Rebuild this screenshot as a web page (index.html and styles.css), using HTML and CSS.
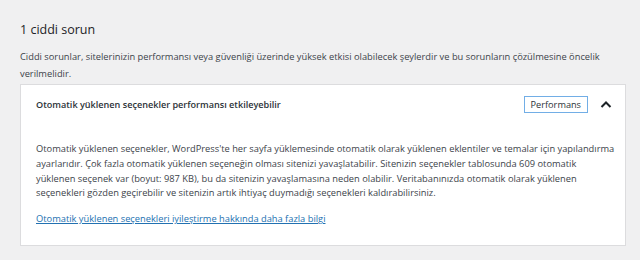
FILE: index.html
```html
<!DOCTYPE html>
<html lang="tr">
<head>
    <meta charset="UTF-8" />
    <title>Site Sağlığı</title>
    <link rel="stylesheet" href="styles.css">
</head>
<body>
    <div class="health-section">
        <h2 class="section-title">1 ciddi sorun</h2>
        <p class="section-desc">Ciddi sorunlar, sitelerinizin performansı veya güvenliği üzerinde yüksek etkisi olabilecek şeylerdir ve bu sorunların çözülmesine öncelik verilmelidir.</p>

        <div class="issue-card">
            <div class="issue-header">
                <span class="issue-title">Otomatik yüklenen seçenekler performansı etkileyebilir</span>
                <span class="badge">Performans</span>
                <svg class="chevron" width="12" height="8" viewBox="0 0 12 8">
                    <path d="M1.5 7 L6 2.5 L10.5 7" fill="none" stroke="#1d2327" stroke-width="2"/>
                </svg>
            </div>
            <div class="issue-body">
                <p>Otomatik yüklenen seçenekler, WordPress'te her sayfa yüklemesinde otomatik olarak yüklenen eklentiler ve temalar için yapılandırma ayarlarıdır. Çok fazla otomatik yüklenen seçeneğin olması sitenizi yavaşlatabilir. Sitenizin seçenekler tablosunda 609 otomatik yüklenen seçenek var (boyut: 987 KB), bu da sitenizin yavaşlamasına neden olabilir. Veritabanınızda otomatik olarak yüklenen seçenekleri gözden geçirebilir ve sitenizin artık ihtiyaç duymadığı seçenekleri kaldırabilirsiniz.</p>
                <a href="#" class="more-link">Otomatik yüklenen seçenekleri iyileştirme hakkında daha fazla bilgi</a>
            </div>
        </div>
    </div>
</body>
</html>
```

FILE: styles.css
```css
* {
    margin: 0;
    padding: 0;
    box-sizing: border-box;
}

body {
    font-family: 'Open Sans', 'Noto Sans', sans-serif;
    background-color: #f0f0f1;
    color: #3c434a;
    font-size: 9.3px;
}

.health-section {
    padding: 20px 14px 0 20px;
}

.section-title {
    font-size: 12.5px;
    font-weight: 400;
    color: #1d2327;
    line-height: 20px;
}

.section-desc {
    margin-top: 8px;
    line-height: 17px;
    padding-right: 8px;
}

.issue-card {
    margin-top: 2px;
    background-color: #fff;
    border: 1px solid #dcdcde;
}

.issue-header {
    display: flex;
    align-items: center;
    padding: 10px 13px 10px 15px;
    height: 38px;
}

.issue-title {
    flex-grow: 1;
    font-weight: 600;
    font-size: 9.1px;
    color: #2c3338;
}

.badge {
    border: 1px solid #72aee6;
    padding: 0 6px;
    line-height: 15px;
    color: #2c3338;
    font-size: 9.2px;
}

.chevron {
    margin-left: 12px;
}

.issue-body {
    padding: 19px 8px 18px 15px;
}

.issue-body p {
    line-height: 14.8px;
}

.more-link {
    display: inline-block;
    margin-top: 11px;
    line-height: 14.8px;
    color: #2271b1;
}
```
